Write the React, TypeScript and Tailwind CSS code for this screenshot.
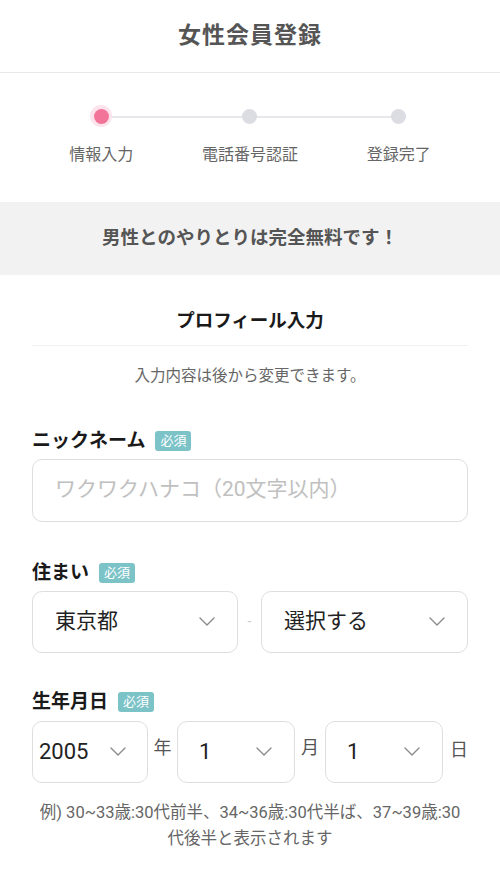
const font = { fontFamily: 'Roboto, "Noto Sans CJK JP", "Noto Sans", sans-serif' }

function Chevron() {
    return (
        <svg width="16" height="9" viewBox="0 0 16 9" fill="none" className="shrink-0">
            <path d="M1 1l7 7 7-7" stroke="#8a8a8a" strokeWidth="1.4" strokeLinecap="round" strokeLinejoin="round" />
        </svg>
    )
}

function Badge() {
    return (
        <span className="ml-[10px] inline-flex h-[20px] items-center rounded-[3px] bg-[#7cc3c8] px-[5px] text-[13px] leading-none text-white">
            必須
        </span>
    )
}

function Label({ text }: { text: string }) {
    return (
        <div className="flex h-[20px] items-center">
            <span className="text-[19px] font-bold leading-none text-[#1a1a1a]">{text}</span>
            <Badge />
        </div>
    )
}

function Select({ value, className, pad, size }: { value: string; className: string; pad: string; size: string }) {
    return (
        <div className={`flex h-[62px] items-center justify-between rounded-[10px] border border-[#dedede] bg-white ${pad} ${className}`}>
            <span className={`${size} leading-none text-[#222]`}>{value}</span>
            <Chevron />
        </div>
    )
}

export default function App() {
    const steps = ['情報入力', '電話番号認証', '登録完了']
    return (
        <div className="w-[500px] min-h-[869px] bg-white" style={font}>
            <div className="flex h-[73px] items-center justify-center border-b border-[#e8e8e8]">
                <h1 className="text-[23px] font-bold tracking-[1px] text-[#555]">女性会員登録</h1>
            </div>

            <div className="h-[129px] px-[27px] pt-[32px]">
                <div className="relative grid grid-cols-3">
                    <div className="absolute left-[16.66%] right-[16.66%] top-[11px] h-[2px] bg-[#e6e7ea]" />
                    {steps.map((s, i) => (
                        <div key={s} className="relative flex flex-col items-center">
                            <div className="flex h-[22px] w-[22px] items-center justify-center rounded-full">
                                {i === 0 ? (
                                    <div className="flex h-[22px] w-[22px] items-center justify-center rounded-full bg-[#fde4ec]">
                                        <div className="h-[15px] w-[15px] rounded-full bg-[#f27498]" />
                                    </div>
                                ) : (
                                    <div className="h-[15px] w-[15px] rounded-full bg-[#dcdde2]" />
                                )}
                            </div>
                            <span className="mt-[20px] text-[16px] leading-none text-[#666]">{s}</span>
                        </div>
                    ))}
                </div>
            </div>

            <div className="flex h-[73px] items-center justify-center bg-[#f3f2f2]">
                <p className="text-[18.5px] font-bold text-[#555]">男性とのやりとりは完全無料です！</p>
            </div>

            <div className="px-[32px]">
                <div className="flex h-[71px] items-end justify-center border-b border-[#f0f0f0] pb-[15px]">
                    <h2 className="text-[18.5px] font-bold leading-none text-[#1a1a1a]">プロフィール入力</h2>
                </div>
                <p className="mt-[23px] text-center text-[15.5px] leading-none text-[#666]">入力内容は後から変更できます。</p>

                <div className="mt-[46px]">
                    <Label text="ニックネーム" />
                    <div className="mt-[8px] flex h-[63px] items-center rounded-[10px] border border-[#dedede] px-[22px]">
                        <span className="text-[21px] text-[#c0c0c0]">ワクワクハナコ（20文字以内）</span>
                    </div>
                </div>

                <div className="mt-[41px]">
                    <Label text="住まい" />
                    <div className="mt-[8px] flex items-center">
                        <Select value="東京都" className="w-[206px]" pad="pl-[22px] pr-[22px]" size="text-[21px]" />
                        <span className="w-[23px] text-center text-[14px] text-[#ccc]">-</span>
                        <Select value="選択する" className="w-[207px]" pad="pl-[22px] pr-[22px]" size="text-[21px]" />
                    </div>
                </div>

                <div className="mt-[39px]">
                    <Label text="生年月日" />
                    <div className="mt-[9px] flex items-center">
                        <Select value="2005" className="w-[116px]" pad="pl-[6px] pr-[21px]" size="text-[22px]" />
                        <span className="w-[29px] pb-[8px] text-center text-[18px] text-[#555]">年</span>
                        <Select value="1" className="w-[118px]" pad="pl-[21px] pr-[22px]" size="text-[22px]" />
                        <span className="w-[30px] pb-[8px] text-center text-[18px] text-[#555]">月</span>
                        <Select value="1" className="w-[118px]" pad="pl-[21px] pr-[22px]" size="text-[22px]" />
                        <span className="w-[25px] pb-[4px] text-right text-[18px] text-[#555]">日</span>
                    </div>
                </div>

                <p className="mt-[17px] px-[2px] text-center text-[16.5px] leading-[26px] text-[#666]">
                    例) 30~33歳:30代前半、34~36歳:30代半ば、37~39歳:30代後半と表示されます
                </p>
            </div>
        </div>
    )
}
